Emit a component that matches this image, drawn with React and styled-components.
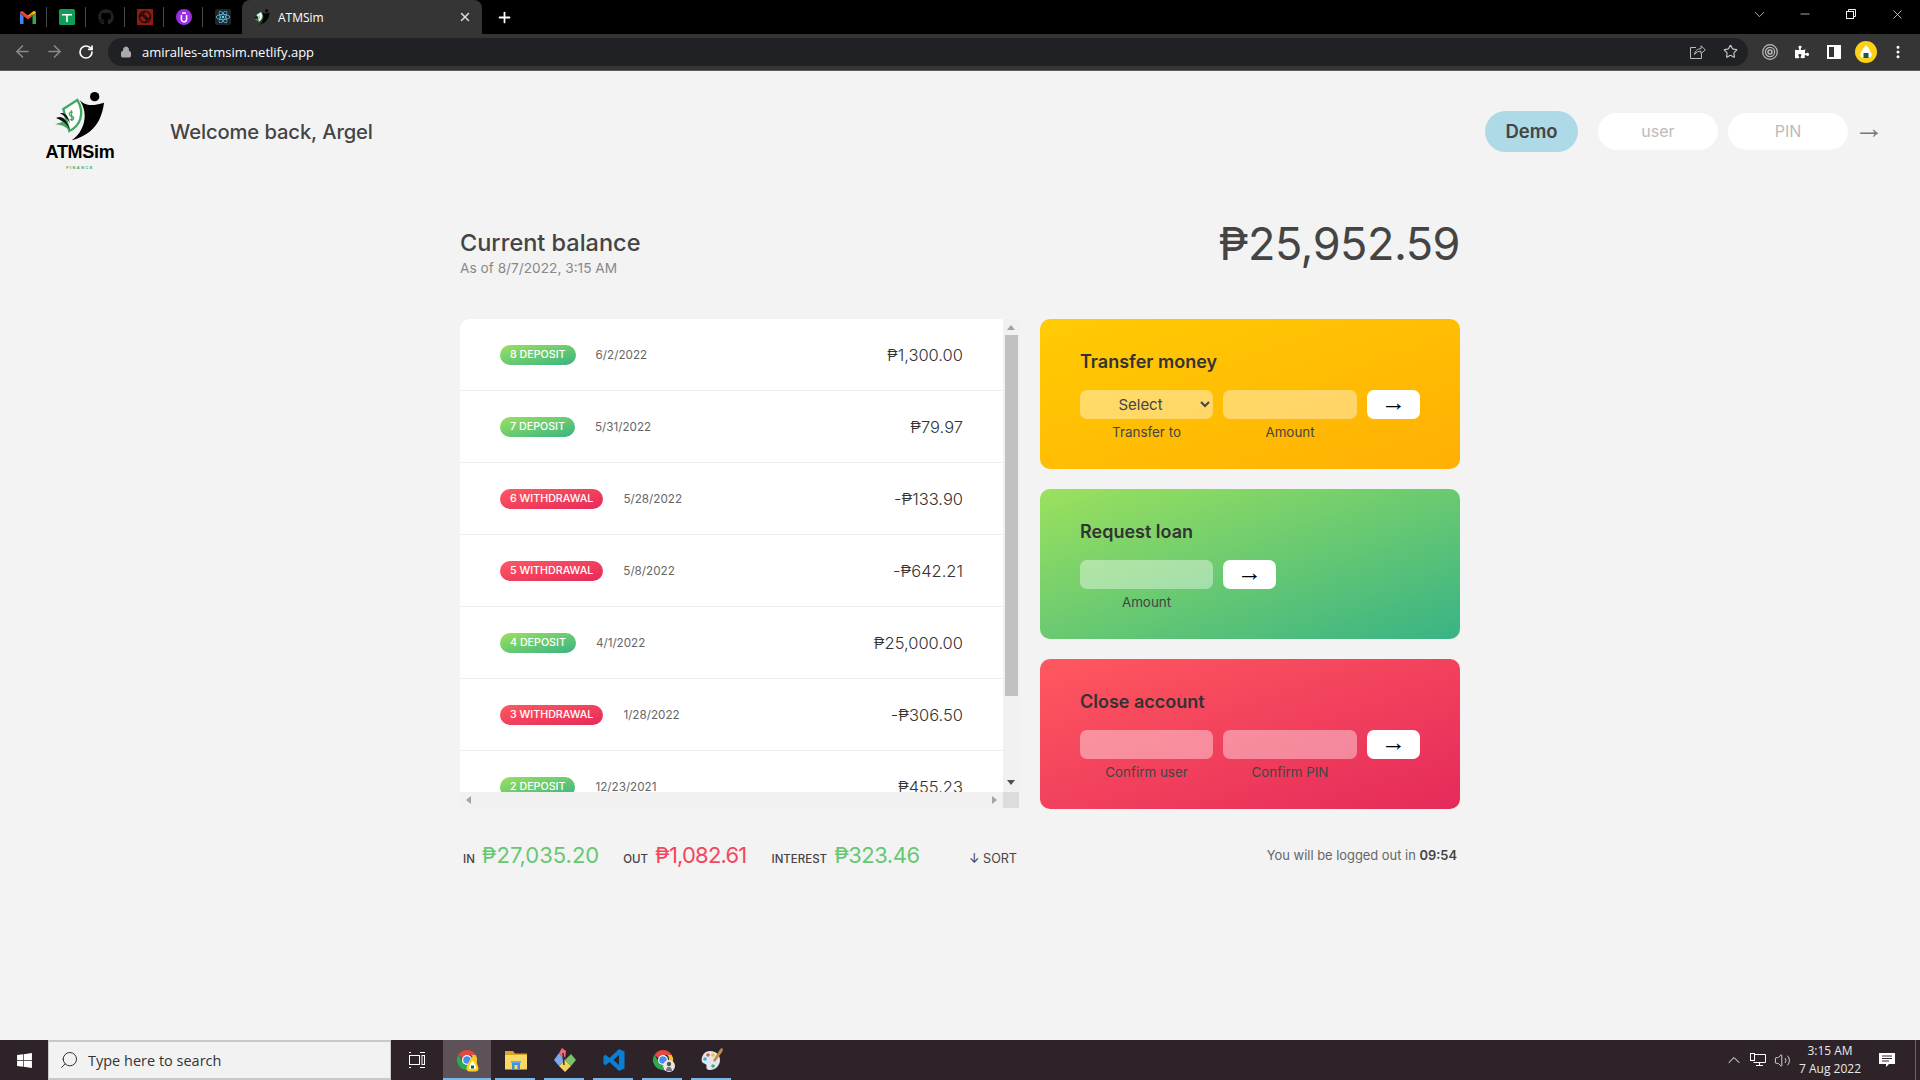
import styled, { createGlobalStyle } from 'styled-components';
import {
  ArrowLeft, ArrowRight, RotateCw, Lock, Star, Plus, X, ChevronDown, ChevronUp, Minus,
  MoreVertical, Search, Volume2,
} from 'lucide-react';
import { FaWindows, FaGithub, FaReact, FaPuzzlePiece } from 'react-icons/fa';

const GlobalStyle = createGlobalStyle`
  * { box-sizing: border-box; margin: 0; padding: 0; }
  body {
    font-family: Inter, "Noto Sans", sans-serif;
    color: #444;
    background: #f3f3f3;
  }
`;

const Shell = styled.div`
  display: flex;
  flex-direction: column;
  height: 100vh;
  overflow: hidden;
`;

/* browser chrome */
const TabStrip = styled.div`
  display: flex;
  align-items: stretch;
  height: 34px;
  background: #000;
  padding-left: 8px;
  color: #fff;
`;

const PinnedTab = styled.div`
  position: relative;
  display: flex;
  align-items: center;
  justify-content: center;
  width: 39px;
  &::after {
    content: '';
    display: ${(p) => (p.$last ? 'none' : 'block')};
    position: absolute;
    right: 0;
    top: 7px;
    height: 20px;
    width: 1px;
    background: #4a4a4a;
  }
`;

const ActiveTab = styled.div`
  display: flex;
  align-items: center;
  width: 240px;
  padding: 0 10px 0 12px;
  background: #353535;
  border-radius: 8px 8px 0 0;
  font: 12px "Open Sans", sans-serif;
  gap: 8px;
  span { flex: 1; }
`;

const NewTab = styled.div`
  display: flex;
  align-items: center;
  justify-content: center;
  width: 20px;
  margin-left: 12px;
`;

const WindowControls = styled.div`
  display: flex;
  margin-left: auto;
`;

const WindowButton = styled.div`
  display: flex;
  align-items: center;
  justify-content: center;
  width: 46px;
  padding-bottom: 6px;
  color: #eee;
`;

const Toolbar = styled.div`
  display: flex;
  align-items: center;
  height: 37px;
  padding: 0 6px 1px;
  background: #353535;
  border-bottom: 1px solid #5c5c5c;
`;

const ToolButton = styled.div`
  display: flex;
  align-items: center;
  justify-content: center;
  width: 32px;
  height: 28px;
  color: ${(p) => p.$color || '#fff'};
`;

const AddressBar = styled.div`
  display: flex;
  align-items: center;
  flex: 1;
  height: 28px;
  margin: 0 6px;
  padding: 0 2px 0 12px;
  border-radius: 14px;
  background: #202124;
  color: #fff;
  font: 13px "Open Sans", sans-serif;
`;

const Url = styled.span`
  flex: 1;
  margin-left: 10px;
`;

/* page */
const Page = styled.div`
  flex: 1;
  background: #f3f3f3;
`;

const Nav = styled.nav`
  display: flex;
  align-items: center;
  height: 122px;
  padding: 0 36px 2px 45px;
`;

const LogoBlock = styled.div`
  display: flex;
  flex-direction: column;
  align-items: center;
  width: 70px;
  font-family: "Liberation Sans", sans-serif;
`;

const LogoName = styled.div`
  margin-top: 1px;
  font-size: 18px;
  font-weight: 700;
  line-height: 20px;
  letter-spacing: -0.3px;
  color: #000;
`;

const LogoSub = styled.div`
  margin-top: 2px;
  font-size: 4px;
  line-height: 8px;
  letter-spacing: 1.4px;
  font-weight: 700;
  color: #4aa863;
`;

const Welcome = styled.p`
  margin-left: 55px;
  font-size: 20.2px;
  font-weight: 500;
  color: #444;
  letter-spacing: -0.1px;
`;

const Login = styled.form`
  display: flex;
  align-items: center;
  margin-left: auto;
`;

const DemoButton = styled.div`
  display: flex;
  align-items: center;
  justify-content: center;
  width: 93px;
  height: 41px;
  margin-right: 20px;
  border-radius: 21px;
  background: #aed9e6;
  font-size: 18.5px;
  font-weight: 600;
  color: #444;
`;

const LoginInput = styled.input`
  width: 120px;
  height: 37px;
  margin-right: 10px;
  border: none;
  outline: none;
  border-radius: 19px;
  background: #fff;
  font: 16px Inter, sans-serif;
  text-align: center;
  color: #444;
  &::placeholder { color: #bbb; }
`;

const Arrow = styled.span`
  display: block;
  margin-bottom: 6px;
  font-family: "Liberation Sans", sans-serif;
  font-size: 25px;
  line-height: 0.8;
  color: #000;
`;

const LoginArrow = styled(Arrow)`
  margin: 0 0 7px -4px;
  font-size: 30px;
  color: #777;
`;

const Main = styled.main`
  width: 1000px;
  margin: 0 auto;
`;

const BalanceRow = styled.div`
  display: flex;
  align-items: flex-start;
  justify-content: space-between;
  height: 126px;
  padding-top: 35px;
`;

const BalanceLabel = styled.p`
  font-size: 23.5px;
  font-weight: 500;
  line-height: 30px;
  color: #444;
`;

const BalanceDate = styled.p`
  font-size: 13.7px;
  line-height: 20px;
  color: #888;
`;

const BalanceValue = styled.p`
  font-size: 45px;
  line-height: 60px;
  color: #444;
  margin-top: -14px;
  letter-spacing: -0.5px;
`;

const Columns = styled.div`
  display: grid;
  grid-template-columns: 4fr 3fr;
  column-gap: 20px;
`;

const ListFrame = styled.div`
  display: grid;
  grid-template-columns: 1fr 16px;
  grid-template-rows: 473px 16px;
  height: 490px;
  width: 559px;
`;

const List = styled.div`
  overflow: hidden;
  background: #fff;
  border-radius: 10px 0 0 0;
`;

const Row = styled.div`
  display: flex;
  align-items: center;
  height: 72px;
  padding: 0 40px;
  border-bottom: 1px solid #eee;
`;

const Badge = styled.span`
  height: 20px;
  padding: 0 10px;
  border-radius: 10px;
  font-size: 10.7px;
  font-weight: 500;
  line-height: 20px;
  color: #fff;
  text-transform: uppercase;
  background-image: ${(p) => (p.$type === 'deposit'
    ? 'linear-gradient(to top left, #39b385, #9be15d)'
    : 'linear-gradient(to top left, #e52a5a, #ff585f)')};
`;

const RowDate = styled.span`
  margin-left: 20px;
  font-size: 11.7px;
  color: #666;
`;

const Amount = styled.span`
  margin-left: auto;
  font-size: 16.5px;
  font-weight: 300;
  color: #333;
`;

const VScroll = styled.div`
  display: flex;
  flex-direction: column;
  align-items: center;
  background: #f1f1f1;
  padding-top: 6px;
`;

const ScrollThumb = styled.div`
  width: 13px;
  height: 361px;
  margin-top: 5px;
  background: #c1c1c1;
`;

const Triangle = styled.i`
  display: block;
  width: 0;
  height: 0;
  border: 4px solid transparent;
  ${(p) => p.$dir === 'up' && 'border-top: 0; border-bottom: 5px solid #a3a3a3;'}
  ${(p) => p.$dir === 'down' && 'border-bottom: 0; border-top: 5px solid #505050; margin-top: auto; margin-bottom: 7px;'}
  ${(p) => p.$dir === 'left' && 'border-left: 0; border-right: 5px solid #a3a3a3;'}
  ${(p) => p.$dir === 'right' && 'border-right: 0; border-left: 5px solid #a3a3a3;'}
`;

const HScroll = styled.div`
  display: flex;
  align-items: center;
  justify-content: space-between;
  padding: 0 6px 0 6px;
  background: #f1f1f1;
`;

const ScrollCorner = styled.div`
  background: #dcdcdc;
`;

const Panels = styled.div`
  display: flex;
  flex-direction: column;
  gap: 20px;
`;

const Panel = styled.section`
  height: 150px;
  padding: 31px 40px;
  border-radius: 10px;
  color: #333;
  background-image: ${(p) => p.$gradient};
`;

const PanelTitle = styled.h2`
  margin-bottom: 16px;
  font-size: 18px;
  font-weight: 600;
  line-height: 24px;
  color: #333;
`;

const PanelForm = styled.form`
  display: grid;
  grid-template-columns: ${(p) => (p.$single ? '133px 53px' : '133px 134px 53px')};
  grid-template-rows: 29px auto;
  column-gap: 10px;
  row-gap: 4px;
`;

const Field = styled.input`
  width: 100%;
  height: 29px;
  border: none;
  outline: none;
  border-radius: 7px;
  background: rgba(255, 255, 255, 0.4);
`;

const SelectField = styled.select`
  width: 100%;
  height: 29px;
  border: none;
  outline: none;
  border-radius: 7px;
  background: rgba(255, 255, 255, 0.4);
  font: 15px Inter, sans-serif;
  color: #444;
  text-align: center;
`;

const GoButton = styled.div`
  display: flex;
  align-items: center;
  justify-content: center;
  height: 29px;
  border-radius: 7px;
  background: #fff;
`;

const FieldLabel = styled.label`
  font-size: 13.4px;
  line-height: 18px;
  text-align: center;
  color: #444;
`;

const Footer = styled.div`
  display: flex;
  align-items: center;
  height: 28px;
  margin-top: 32px;
`;

const Summary = styled.div`
  display: flex;
  align-items: baseline;
  width: 560px;
  padding: 0 3px;
`;

const SummaryLabel = styled.span`
  margin-right: 7px;
  font-size: 11.5px;
  font-weight: 500;
  color: #444;
  text-transform: uppercase;
`;

const SummaryValue = styled.span`
  margin-right: ${(p) => p.$gap}px;
  font-size: 22px;
  letter-spacing: ${(p) => p.$tracking || 0}px;
  color: ${(p) => p.$color};
`;

const SortButton = styled.span`
  margin-left: auto;
  font-size: 12.6px;
  color: #444;
`;

const Timer = styled.p`
  margin-left: auto;
  padding-right: 3px;
  font-size: 12.9px;
  color: #666;
  b { color: #444; font-weight: 600; }
`;

/* windows taskbar */
const Taskbar = styled.div`
  display: flex;
  align-items: stretch;
  height: 40px;
  background: #2e2329;
  color: #fff;
`;

const StartButton = styled.div`
  display: flex;
  align-items: center;
  justify-content: center;
  width: 48px;
`;

const SearchBox = styled.div`
  display: flex;
  align-items: center;
  gap: 9px;
  width: 343px;
  padding-left: 10px;
  background: #f2f2f2;
  border: 2px solid #c8c8c8;
  border-right-width: 1px;
  border-left-width: 1px;
  color: #333;
  font: 14.5px "Open Sans", sans-serif;
  svg { transform: scaleX(-1); }
`;

const TaskSlot = styled.div`
  position: relative;
  display: flex;
  align-items: center;
  justify-content: center;
  width: ${(p) => p.$width || 49}px;
  background: ${(p) => (p.$active ? '#5d5257' : 'transparent')};
  &::after {
    content: '';
    display: ${(p) => (p.$open ? 'block' : 'none')};
    position: absolute;
    bottom: 0;
    left: ${(p) => (p.$active ? 0 : 4)}px;
    right: ${(p) => (p.$active ? 0 : 5)}px;
    height: 2px;
    background: #76b9ed;
  }
`;

const Tray = styled.div`
  display: flex;
  align-items: stretch;
  margin-left: auto;
`;

const TraySlot = styled.div`
  display: flex;
  align-items: center;
  justify-content: center;
  width: ${(p) => p.$width || 24}px;
`;

const Clock = styled.div`
  display: flex;
  flex-direction: column;
  justify-content: center;
  align-items: center;
  width: 72px;
  font: 12px/18px "Open Sans", sans-serif;
  color: #e8e8e8;
`;

const ShowDesktop = styled.div`
  width: 5px;
  margin-left: 7px;
  border-left: 1px solid #6b6166;
`;

const GmailIcon = () => (
  <svg width="16" height="13" viewBox="0 0 16 13">
    <path d="M0 2v10c0 .6.4 1 1 1h2.500V5z" fill="#4285f4" />
    <path d="M12.500 5v8H15c.6 0 1-.4 1-1V2z" fill="#34a853" />
    <path d="M0 2c0-1.600 1.800-2.500 3-1.500L8 4.500v3L0 2z" fill="#ea4335" />
    <path d="M16 2c0-1.600-1.800-2.500-3-1.500L8 4.500v3L16 2z" fill="#fbbc04" />
    <path d="M3.500 2.400L8 5.800l4.500-3.400V5L8 8.400 3.500 5z" fill="#ea4335" />
  </svg>
);

const SheetIcon = () => (
  <svg width="16" height="16" viewBox="0 0 16 16">
    <rect width="16" height="16" rx="1.500" fill="#0f9d58" />
    <path d="M3 5h10v1.600H8.800V13H7.200V6.600H3z" fill="#fff" />
  </svg>
);

const SwirlIcon = () => (
  <svg width="16" height="16" viewBox="0 0 16 16">
    <rect width="16" height="16" fill="#8e1a17" />
    <g fill="none" stroke="#1e0b0a" strokeWidth="1.300">
      <circle cx="8" cy="8" r="5.600" />
      <path d="M8 2.400C5 5 5 8 8 8s3 3 0 5.600M2.400 8C5 5 8 5 8 8s3 3 5.600 0" />
    </g>
  </svg>
);

const UIcon = () => (
  <svg width="16" height="16" viewBox="0 0 16 16">
    <circle cx="8" cy="8" r="8" fill="#9a2fe0" />
    <path d="M5.400 6v4.200a2.600 2.600 0 0 0 5.200 0V6" fill="none" stroke="#fff" strokeWidth="1.500" />
    <rect x="6" y="3.400" width="4" height="1.400" fill="#fff" />
  </svg>
);

const ReactTile = styled.div`
  display: flex;
  align-items: center;
  justify-content: center;
  width: 16px;
  height: 16px;
  border-radius: 2px;
  background: #20232a;
  color: #61dafb;
`;

const LogoMark = ({ size = 50 }) => (
  <svg width={size} height={size} viewBox="75 30 150 150">
    <path d="M142 57L100 84l18 66c32-15 48-52 24-93z" fill="#fff" stroke="#3fa75f" strokeWidth="7" />
    <path d="M128 94c-6-3-13 2-9 8 3 4 11 3 12 9 1 5-7 8-12 4M124 88l2 32" fill="none" stroke="#3fa75f" strokeWidth="4" />
    <path d="M78 111c16-8 30-2 42 36-10-18-24-30-42-36z" fill="#111" />
    <path d="M90 97c14-4 24 6 30 30-8-14-18-24-30-30z" fill="#111" />
    <path d="M75 130l24-8c8 4 14 14 19 26-12-12-26-18-43-18z" fill="#3fa75f" />
    <circle cx="194" cy="47" r="14" fill="#000" />
    <path d="M148 56c17 16 32 22 74 9-7 55-32 95-97 113 35-23 55-78 23-122z" fill="#000" />
  </svg>
);

const Onigiri = ({ size = 22 }) => (
  <svg width={size} height={size} viewBox="0 0 22 22">
    <circle cx="11" cy="11" r="11" fill="#fcd116" />
    <path d="M11 4.500c1.200 0 5.800 7.500 5.800 9.500 0 1.600-1 2.500-2.500 2.500H7.700c-1.500 0-2.500-.9-2.500-2.500 0-2 4.600-9.500 5.800-9.500z" fill="#fff" />
    <rect x="8.500" y="12" width="5" height="5" fill="#155a48" />
  </svg>
);

const ChromeIcon = ({ badge }) => (
  <svg width="24" height="24" viewBox="0 0 24 24">
    <path d="M12 2a10 10 0 0 1 8.700 5H12a5 5 0 0 0-4.700 3.300L3.500 6.700A10 10 0 0 1 12 2z" fill="#e04a3f" />
    <path d="M20.700 7A10 10 0 0 1 12 22l4.300-7.500A5 5 0 0 0 16.300 7z" fill="#f7c32e" />
    <path d="M12 22A10 10 0 0 1 3.500 6.700l4.300 7.500a5 5 0 0 0 4.200 2.800z" fill="#2fa84f" />
    <circle cx="12" cy="12" r="5" fill="#fff" />
    <circle cx="12" cy="12" r="3.800" fill="#4a8af4" />
    {badge === 'onigiri' && (
      <g transform="translate(11 9)">
        <path d="M6.500 0c1.500 0 6 9 6 11.500a3 3 0 0 1-3 3h-6a3 3 0 0 1-3-3C.5 9 5 0 6.500 0z" fill="#fcd116" />
        <path d="M6.500 4c.8 0 3.500 5 3.500 6.500 0 1-.6 1.500-1.500 1.500h-4C3.600 12 3 11.500 3 10.500 3 9 5.700 4 6.500 4z" fill="#fff" />
        <rect x="5" y="8.500" width="3" height="3" fill="#155a48" />
      </g>
    )}
    {badge === 'user' && (
      <g>
        <circle cx="18" cy="18" r="6" fill="#e8e8e8" />
        <circle cx="18" cy="16" r="2.200" fill="#555" />
        <path d="M15 23c0-3 1.500-4.200 3-4.200s3 1.200 3 4.200z" fill="#777" />
      </g>
    )}
  </svg>
);

const FolderIcon = () => (
  <svg width="24" height="22" viewBox="0 0 24 22">
    <path d="M1 2h8l2 2.500h12V20H1z" fill="#d9a42a" />
    <path d="M1 6h22v14.500H1z" fill="#fcd765" />
    <path d="M8 12.500h8V20h-2.500v-4h-3v4H8z" fill="#3d93d8" />
    <path d="M7 12h10v2H7z" fill="#5db0ea" />
  </svg>
);

const GitIcon = () => (
  <svg width="24" height="26" viewBox="0 0 24 26">
    <path d="M12 13L6 6 1 13l5 6z" fill="#7ba8ef" />
    <path d="M12 13l6-6 5 6-5 6z" fill="#79c267" />
    <path d="M6 19l6-6 6 6-6 6z" fill="#f5d25b" />
    <path d="M6 6l3-5 4 3-1 9z" fill="#ef6d7a" />
    <path d="M10 6l1 12" stroke="#333" strokeWidth="1.500" />
    <circle cx="11" cy="11" r="1.500" fill="#333" />
  </svg>
);

const CodeIcon = () => (
  <svg width="24" height="24" viewBox="0 0 24 24">
    <path fillRule="evenodd" d="M17 1l5.500 2.600v16.800L17 23 7.500 14l-4 3.200L1.500 16V8l2-1.200L7.500 10zM17 7l-5.500 5 5.500 5z" fill="#0a7fd4" />
  </svg>
);

const PaletteIcon = () => (
  <svg width="26" height="26" viewBox="0 0 26 26">
    <path d="M11 4c6 0 10 4 10 9 0 6-5 10-10 10-3 0-4-1.500-3.500-3.500C8 17 6 17 4 16 1 14 3 4 11 4z" fill="#dfe8ee" />
    <circle cx="9" cy="8" r="1.800" fill="#e8524a" />
    <circle cx="14" cy="8" r="1.800" fill="#f4c01e" />
    <circle cx="6" cy="12" r="1.800" fill="#3ea7e0" />
    <circle cx="14" cy="19" r="1.800" fill="#42b35d" />
    <path d="M23 1c1 1 1 2 0 4l-7 10-2-1.500L21 2.500c.7-.8 1.300-1.200 2-1.500z" fill="#c28a4a" />
  </svg>
);

const NetworkIcon = () => (
  <svg width="16" height="14" viewBox="0 0 16 14" fill="none" stroke="#fff" strokeWidth="1">
    <path d="M3.500 1.500H15.500V9.500H3.500M9.500 9.500V12.500M6 12.500H13" />
    <rect x="0.500" y="0.500" width="4" height="7" fill="#2e2329" />
  </svg>
);

const TaskViewIcon = () => (
  <svg width="16" height="16" viewBox="0 0 16 16" fill="none" stroke="#fff" strokeWidth="1">
    <path d="M0 .5h2M11 .5h5M0 15.500h2M11 15.500h5" />
    <rect x=".5" y="3.500" width="10" height="9" />
    <rect x="13" y="3.500" width="2.500" height="9" />
  </svg>
);

const NoticeIcon = () => (
  <svg width="16" height="15" viewBox="0 0 16 15">
    <path d="M0 0h16v11h-6l-3 3v-3H0z" fill="#fff" />
    <path d="M3 3h10M3 5.500h10M3 8h7" stroke="#2e2329" strokeWidth="1" />
  </svg>
);

const TargetIcon = () => (
  <svg width="16" height="16" viewBox="0 0 16 16" fill="none" stroke="#bbb">
    <circle cx="8" cy="8" r="7.300" strokeWidth="1.200" />
    <circle cx="8" cy="8" r="4.600" strokeWidth="1.200" />
    <circle cx="8" cy="8" r="2" strokeWidth="1.500" />
  </svg>
);

const SidebarIcon = () => (
  <svg width="14" height="14" viewBox="0 0 14 14">
    <path fillRule="evenodd" d="M0 0h14v14H0zM2 2v10h5V2z" fill="#fff" />
  </svg>
);

const ShareIcon = () => (
  <svg width="16" height="15" viewBox="0 0 16 15" fill="none" stroke="#bbb" strokeWidth="1">
    <path d="M6 3.500H.5v11h11V10" />
    <path d="M4.500 10.500C5 6.500 8 4.700 11 4.700V1.800l4.300 4-4.300 4V7.200c-2.500 0-5 1-6.500 3.300z" />
  </svg>
);

const movements = [
  { id: 8, type: 'deposit', date: '6/2/2022', amount: '₱1,300.00' },
  { id: 7, type: 'deposit', date: '5/31/2022', amount: '₱79.97' },
  { id: 6, type: 'withdrawal', date: '5/28/2022', amount: '-₱133.90' },
  { id: 5, type: 'withdrawal', date: '5/8/2022', amount: '-₱642.21' },
  { id: 4, type: 'deposit', date: '4/1/2022', amount: '₱25,000.00' },
  { id: 3, type: 'withdrawal', date: '1/28/2022', amount: '-₱306.50' },
  { id: 2, type: 'deposit', date: '12/23/2021', amount: '₱455.23' },
];

const YELLOW = 'linear-gradient(to bottom right, #ffcb03, #ffb003)';
const GREEN = 'linear-gradient(to bottom right, #9be15d, #39b385)';
const RED = 'linear-gradient(to bottom right, #ff585f, #e52a5a)';

const App = () => (
  <Shell>
    <GlobalStyle />
    <TabStrip>
      <PinnedTab><GmailIcon /></PinnedTab>
      <PinnedTab><SheetIcon /></PinnedTab>
      <PinnedTab><FaGithub size={16} color="#1e2428" /></PinnedTab>
      <PinnedTab><SwirlIcon /></PinnedTab>
      <PinnedTab><UIcon /></PinnedTab>
      <PinnedTab $last><ReactTile><FaReact size={14} /></ReactTile></PinnedTab>
      <ActiveTab>
        <LogoMark size={16} />
        <span>ATMSim</span>
        <X size={14} strokeWidth={2.5} color="#ddd" />
      </ActiveTab>
      <NewTab><Plus size={17} strokeWidth={2.5} /></NewTab>
      <WindowControls>
        <WindowButton><ChevronDown size={17} strokeWidth={1} /></WindowButton>
        <WindowButton><Minus size={14} strokeWidth={1.2} /></WindowButton>
        <WindowButton>
          <svg width="10" height="10" viewBox="0 0 10 10" fill="none" stroke="#eee">
            <path d="M2.500 2.500V.5h7v7h-2" />
            <rect x=".5" y="2.500" width="7" height="7" />
          </svg>
        </WindowButton>
        <WindowButton><X size={15} strokeWidth={1.2} /></WindowButton>
      </WindowControls>
    </TabStrip>

    <Toolbar>
      <ToolButton $color="#8a8a8a"><ArrowLeft size={19} /></ToolButton>
      <ToolButton $color="#8a8a8a"><ArrowRight size={19} /></ToolButton>
      <ToolButton><RotateCw size={16} strokeWidth={2.5} /></ToolButton>
      <AddressBar>
        <Lock size={12} fill="#aaa" color="#aaa" />
        <Url>amiralles-atmsim.netlify.app</Url>
        <ToolButton><ShareIcon /></ToolButton>
        <ToolButton $color="#ccc"><Star size={15} strokeWidth={1.8} /></ToolButton>
      </AddressBar>
      <ToolButton><TargetIcon /></ToolButton>
      <ToolButton><FaPuzzlePiece size={14} /></ToolButton>
      <ToolButton><SidebarIcon /></ToolButton>
      <ToolButton><Onigiri /></ToolButton>
      <ToolButton><MoreVertical size={16} strokeWidth={2.5} /></ToolButton>
    </Toolbar>

    <Page>
      <Nav>
        <LogoBlock>
          <LogoMark />
          <LogoName>ATMSim</LogoName>
          <LogoSub>FINANCE</LogoSub>
        </LogoBlock>
        <Welcome>Welcome back, Argel</Welcome>
        <Login>
          <DemoButton>Demo</DemoButton>
          <LoginInput placeholder="user" />
          <LoginInput placeholder="PIN" />
          <LoginArrow>→</LoginArrow>
        </Login>
      </Nav>

      <Main>
        <BalanceRow>
          <div>
            <BalanceLabel>Current balance</BalanceLabel>
            <BalanceDate>As of 8/7/2022, 3:15 AM</BalanceDate>
          </div>
          <BalanceValue>₱25,952.59</BalanceValue>
        </BalanceRow>

        <Columns>
          <ListFrame>
            <List>
              {movements.map((m) => (
                <Row key={m.id}>
                  <Badge $type={m.type}>{m.id} {m.type}</Badge>
                  <RowDate>{m.date}</RowDate>
                  <Amount>{m.amount}</Amount>
                </Row>
              ))}
            </List>
            <VScroll>
              <Triangle $dir="up" />
              <ScrollThumb />
              <Triangle $dir="down" />
            </VScroll>
            <HScroll>
              <Triangle $dir="left" />
              <Triangle $dir="right" />
            </HScroll>
            <ScrollCorner />
          </ListFrame>

          <Panels>
            <Panel $gradient={YELLOW}>
              <PanelTitle>Transfer money</PanelTitle>
              <PanelForm>
                <SelectField defaultValue="">
                  <option value="">Select</option>
                </SelectField>
                <Field />
                <GoButton><Arrow>→</Arrow></GoButton>
                <FieldLabel>Transfer to</FieldLabel>
                <FieldLabel>Amount</FieldLabel>
              </PanelForm>
            </Panel>
            <Panel $gradient={GREEN}>
              <PanelTitle>Request loan</PanelTitle>
              <PanelForm $single>
                <Field />
                <GoButton><Arrow>→</Arrow></GoButton>
                <FieldLabel>Amount</FieldLabel>
              </PanelForm>
            </Panel>
            <Panel $gradient={RED}>
              <PanelTitle>Close account</PanelTitle>
              <PanelForm>
                <Field />
                <Field />
                <GoButton><Arrow>→</Arrow></GoButton>
                <FieldLabel>Confirm user</FieldLabel>
                <FieldLabel>Confirm PIN</FieldLabel>
              </PanelForm>
            </Panel>
          </Panels>
        </Columns>

        <Footer>
          <Summary>
            <SummaryLabel>In</SummaryLabel>
            <SummaryValue $color="#66c873" $gap={24}>₱27,035.20</SummaryValue>
            <SummaryLabel>Out</SummaryLabel>
            <SummaryValue $color="#f5465d" $gap={25} $tracking={-0.8}>₱1,082.61</SummaryValue>
            <SummaryLabel>Interest</SummaryLabel>
            <SummaryValue $color="#66c873" $gap={0} $tracking={-0.5}>₱323.46</SummaryValue>
            <SortButton>↓ SORT</SortButton>
          </Summary>
          <Timer>You will be logged out in <b>09:54</b></Timer>
        </Footer>
      </Main>
    </Page>

    <Taskbar>
      <StartButton><FaWindows size={17} /></StartButton>
      <SearchBox>
        <Search size={20} strokeWidth={1.2} />
        Type here to search
      </SearchBox>
      <TaskSlot $width={52}><TaskViewIcon /></TaskSlot>
      <TaskSlot $width={48} $active $open><ChromeIcon badge="onigiri" /></TaskSlot>
      <TaskSlot $open><FolderIcon /></TaskSlot>
      <TaskSlot $open><GitIcon /></TaskSlot>
      <TaskSlot $open><CodeIcon /></TaskSlot>
      <TaskSlot $open><ChromeIcon badge="user" /></TaskSlot>
      <TaskSlot $open><PaletteIcon /></TaskSlot>
      <Tray>
        <TraySlot><ChevronUp size={20} strokeWidth={1.2} /></TraySlot>
        <TraySlot><NetworkIcon /></TraySlot>
        <TraySlot><Volume2 size={17} strokeWidth={1.1} /></TraySlot>
        <Clock>
          <span>3:15 AM</span>
          <span>7 Aug 2022</span>
        </Clock>
        <TraySlot $width={42}><NoticeIcon /></TraySlot>
        <ShowDesktop />
      </Tray>
    </Taskbar>
  </Shell>
);

export default App;
